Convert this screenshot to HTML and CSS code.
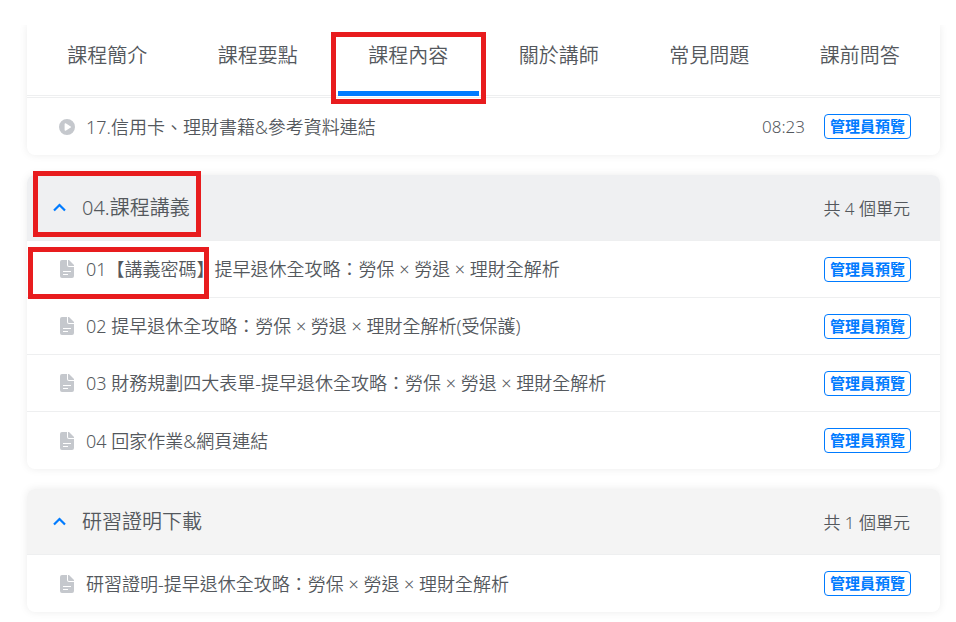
FILE: index.html
```html
<!DOCTYPE html>
<html lang="zh-Hant">
<head>
    <meta charset="UTF-8">
    <meta name="viewport" content="width=device-width, initial-scale=1.0">
    <title>課程內容</title>
    <link rel="stylesheet" href="styles.css">
</head>
<body>
    <svg class="sprite" aria-hidden="true">
        <symbol id="icon-play" viewBox="0 0 16 16">
            <path fill-rule="evenodd" d="M8 0a8 8 0 1 0 0 16A8 8 0 0 0 8 0zM5.600 4.900v6.200c0 .6.6.9 1.100.6l5-3.100c.5-.3.5-.9 0-1.200l-5-3.100c-.5-.3-1.100 0-1.100.6z"/>
        </symbol>
        <symbol id="icon-file" viewBox="0 0 14 18">
            <path fill-rule="evenodd" d="M2 0h5v5a2 2 0 0 0 2 2h5v9a2 2 0 0 1-2 2H2a2 2 0 0 1-2-2V2a2 2 0 0 1 2-2zM3 11v1h8V11zM3 14v1h5V14z"/>
            <path d="M8 0h1l5 5v1h-5a1 1 0 0 1-1-1z"/>
        </symbol>
        <symbol id="icon-up" viewBox="0 0 13 9">
            <path d="M1 7.500l5.500-5.500L12 7.500" fill="none" stroke="currentColor" stroke-width="2.200"/>
        </symbol>
    </svg>

    <main class="course">
        <section class="card card-top">
            <nav class="tabs">
                <a class="tab" href="#intro">課程簡介</a>
                <a class="tab" href="#points">課程要點</a>
                <a class="tab active" href="#content">課程內容<span class="mark mark-tab"></span></a>
                <a class="tab" href="#teacher">關於講師</a>
                <a class="tab" href="#faq">常見問題</a>
                <a class="tab" href="#ask">課前問答</a>
            </nav>
            <ul class="units">
                <li class="unit">
                    <svg class="icon"><use href="#icon-play"/></svg>
                    <span class="name">17.信用卡、理財書籍&amp;參考資料連結</span>
                    <span class="time">08:23</span>
                    <button class="preview" type="button">管理員預覽</button>
                </li>
            </ul>
        </section>

        <section class="card" id="content">
            <button class="chapter hovered" type="button" aria-expanded="true">
                <svg class="arrow"><use href="#icon-up"/></svg>
                <span class="title">04.課程講義</span>
                <span class="count">共 4 個單元</span>
                <span class="mark mark-chapter"></span>
            </button>
            <ul class="units">
                <li class="unit">
                    <svg class="icon"><use href="#icon-file"/></svg>
                    <span class="name">01【講義密碼】提早退休全攻略：勞保 × 勞退 × 理財全解析</span>
                    <button class="preview" type="button">管理員預覽</button>
                    <span class="mark mark-unit"></span>
                </li>
                <li class="unit">
                    <svg class="icon"><use href="#icon-file"/></svg>
                    <span class="name">02 提早退休全攻略：勞保 × 勞退 × 理財全解析(受保護)</span>
                    <button class="preview" type="button">管理員預覽</button>
                </li>
                <li class="unit">
                    <svg class="icon"><use href="#icon-file"/></svg>
                    <span class="name">03 財務規劃四大表單-提早退休全攻略：勞保 × 勞退 × 理財全解析</span>
                    <button class="preview" type="button">管理員預覽</button>
                </li>
                <li class="unit">
                    <svg class="icon"><use href="#icon-file"/></svg>
                    <span class="name">04 回家作業&amp;網頁連結</span>
                    <button class="preview" type="button">管理員預覽</button>
                </li>
            </ul>
        </section>

        <section class="card">
            <button class="chapter" type="button" aria-expanded="true">
                <svg class="arrow"><use href="#icon-up"/></svg>
                <span class="title">研習證明下載</span>
                <span class="count">共 1 個單元</span>
            </button>
            <ul class="units">
                <li class="unit">
                    <svg class="icon"><use href="#icon-file"/></svg>
                    <span class="name">研習證明-提早退休全攻略：勞保 × 勞退 × 理財全解析</span>
                    <button class="preview" type="button">管理員預覽</button>
                </li>
            </ul>
        </section>
    </main>
</body>
</html>
```
FILE: styles.css
```css
:root {
    --text: #54585d;
    --blue: #007bff;
    --line: #eeeff0;
    --icon: #c5c8cd;
    --mark: #e81c1e;
}
* {
    box-sizing: border-box;
}
body {
    margin: 0;
    background: #fff;
    color: var(--text);
    font-family: "Noto Sans", "Noto Sans CJK TC", sans-serif;
    font-size: 17px;
    font-weight: 350;
    line-height: 24px;
}
button {
    font-family: inherit;
    cursor: pointer;
}
.sprite {
    display: none;
}
.course {
    display: flex;
    flex-direction: column;
    gap: 20px;
    padding: 25px 16px 10px 27px;
}
.card {
    background: #fff;
    border-radius: 8px;
    box-shadow: 0 0 8px rgba(0, 0, 0, 0.08);
}
.card-top {
    border-radius: 0 0 8px 8px;
    clip-path: inset(0 -12px -12px -12px);
}
.tabs {
    display: grid;
    grid-template-columns: repeat(6, 1fr);
    gap: 10px;
    padding: 0 10px;
    margin-bottom: 1px;
    border-bottom: 1px solid var(--line);
}
.tab {
    position: relative;
    height: 71px;
    margin-bottom: -1px;
    padding-top: 16px;
    border-bottom: 5px solid transparent;
    color: inherit;
    font-size: 20px;
    line-height: 30px;
    text-align: center;
    text-decoration: none;
}
.tab.active {
    border-bottom-color: var(--blue);
}
.chapter {
    position: relative;
    display: flex;
    align-items: center;
    gap: 16px;
    width: 100%;
    height: 65px;
    padding: 0 30px 0 26px;
    border: none;
    border-radius: 8px 8px 0 0;
    background: #f4f4f4;
    color: inherit;
    font-size: 17px;
    font-weight: 350;
    text-align: left;
}
.chapter.hovered {
    background: #eff0f2;
}
.arrow {
    width: 13px;
    height: 9px;
    color: var(--blue);
}
.title {
    flex: 1;
    font-size: 20px;
    line-height: 30px;
}
.units {
    margin: 0;
    padding: 0;
    list-style: none;
}
.unit {
    position: relative;
    display: flex;
    align-items: center;
    gap: 11px;
    min-height: 57px;
    padding: 0 29px 0 32px;
    border-top: 1px solid var(--line);
}
.unit:last-child {
    min-height: 58px;
}
.icon {
    width: 16px;
    height: 18px;
    fill: var(--icon);
}
.name {
    flex: 1;
    font-size: 18px;
}
.time {
    margin-right: 8px;
}
.preview {
    height: 25px;
    padding: 0 5px 1px;
    border: 1px solid var(--blue);
    border-radius: 4px;
    background: #fff;
    color: var(--blue);
    font-size: 15px;
    font-weight: 700;
    line-height: 20px;
}
/* red highlight frames laid over the page */
.mark {
    position: absolute;
    z-index: 1;
    border: 5px solid var(--mark);
    pointer-events: none;
}
.mark-tab {
    inset: 7px -7px -13px -7px;
}
.mark-chapter {
    top: -4px;
    left: 6px;
    width: 168px;
    height: 66px;
}
.mark-unit {
    top: 6px;
    left: 1px;
    width: 181px;
    height: 52px;
}
```
